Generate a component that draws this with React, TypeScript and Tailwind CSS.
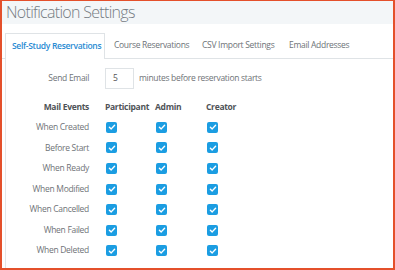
import React from "react";

const rows = [
  "When Created",
  "Before Start",
  "When Ready",
  "When Modified",
  "When Cancelled",
  "When Failed",
  "When Deleted",
];

function Check() {
  return (
    <span className="flex h-[11px] w-[11px] items-center justify-center rounded-[2px] bg-[#1b9de2]">
      <svg width="8" height="8" viewBox="0 0 8 8">
        <path d="M1.4 4.2 L3.2 5.9 L6.6 2.2" fill="none" stroke="white" strokeWidth="1.4" strokeLinecap="round" strokeLinejoin="round" />
      </svg>
    </span>
  );
}

export default function App() {
  return (
    <div
      className="box-border flex h-[270px] w-[395px] flex-col whitespace-nowrap border-2 border-t border-[#e4502b] bg-white"
      style={{ fontFamily: "'Open Sans', Lato, sans-serif" }}
    >
      <div className="flex h-[23px] items-center bg-[#f3f6f8] pl-[4px]">
        <span className="-mt-[2px] text-[16px] font-light leading-none tracking-[-0.7px] text-[#757b82]">Notification Settings</span>
      </div>
      <div className="mt-[9px] flex h-[26px] items-stretch border-b border-[#dfe3e6] pl-[3px] text-[8.5px] tracking-[-0.3px]">
        <div className="-mb-px flex w-[100px] items-center border border-b-0 border-[#dfe3e6] bg-white pl-[6px] font-semibold text-[#2a8bd3]">
          Self-Study Reservations
        </div>
        <div className="flex w-[88px] items-center pl-[9px] text-[#6e7378]">Course Reservations</div>
        <div className="flex w-[87px] items-center pl-[9px] text-[#6e7378]">CSV Import Settings</div>
        <div className="flex items-center pl-[9px] text-[#6e7378]">Email Addresses</div>
      </div>
      <div className="ml-[3px] flex-1 border-l border-[#e3e6e8] text-[8.5px] tracking-[-0.3px] text-[#6f7377]">
        <div className="mt-[9px] flex h-[21px] items-center">
          <div className="w-[83px] text-right">Send Email</div>
          <div className="ml-[16px] flex h-[21px] w-[29px] items-center border border-[#dfe3e6] pl-[7px] text-[#555]">5</div>
          <div className="ml-[5px]">minutes before reservation starts</div>
        </div>
        <div className="mt-[8px] flex h-[20px] items-center font-bold text-[#4f5357]">
          <div className="w-[83px] text-right">Mail Events</div>
          <div className="ml-[16px] w-[50px]">Participant</div>
          <div className="w-[51px]">Admin</div>
          <div>Creator</div>
        </div>
        {rows.map((r) => (
          <div key={r} className="flex h-[20.6px] items-center">
            <div className="w-[83px] text-right">{r}</div>
            <div className="ml-[17px] w-[50px]"><Check /></div>
            <div className="w-[51px]"><Check /></div>
            <div><Check /></div>
          </div>
        ))}
      </div>
    </div>
  );
}
